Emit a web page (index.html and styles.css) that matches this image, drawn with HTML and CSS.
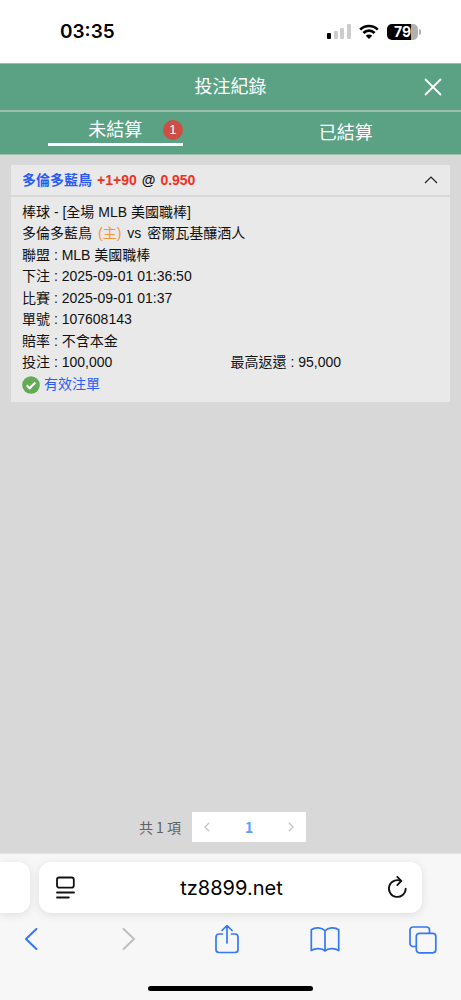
FILE: index.html
```html
<!DOCTYPE html>
<html lang="zh-Hant">
<head>
<meta charset="utf-8">
<meta name="viewport" content="width=device-width, initial-scale=1">
<title>投注紀錄</title>
<link rel="stylesheet" href="styles.css">
</head>
<body>
<div class="screen">
  <div class="status">
    <span class="clock">03:35</span>
    <div class="indicators">
      <svg class="signal" width="24" height="16" viewBox="0 0 24 16" aria-hidden="true">
        <rect x="0" y="9" width="4" height="6" rx="1" fill="#000"/>
        <rect x="7" y="7" width="4" height="8" rx="1" fill="#ccc"/>
        <rect x="13" y="4" width="4" height="11" rx="1" fill="#ccc"/>
        <rect x="20" y="0" width="4" height="15" rx="1" fill="#ccc"/>
      </svg>
      <svg class="wifi" width="20" height="16" viewBox="0 0 20 16" aria-hidden="true">
        <path d="M1.2 5.600a12.600 12.600 0 0 1 17.600 0M4.400 9a8 8 0 0 1 11.200 0" fill="none" stroke="#000" stroke-width="2.700"/>
        <path d="M6.800 11.700a4.600 4.600 0 0 1 6.400 0L10 15z" fill="#000"/>
      </svg>
      <span class="battery"><span class="level">79</span></span>
    </div>
  </div>

  <header class="titlebar">
    <h1 class="title">投注紀錄</h1>
    <button class="close" type="button" aria-label="關閉">
      <svg width="18" height="18" viewBox="0 0 18 18"><path d="M1 1l16 16M17 1L1 17" fill="none" stroke="#fff" stroke-width="1.8"/></svg>
    </button>
  </header>

  <nav class="tabs">
    <button class="tab active" type="button"><span class="tablabel">未結算<span class="badge">1</span></span></button>
    <button class="tab" type="button">已結算</button>
  </nav>

  <main class="content">
    <article class="card">
      <div class="cardhead">
        <h2 class="pick"><span class="blue">多倫多藍鳥</span> <span class="red">+1+90</span> <span>@</span> <span class="red">0.950</span></h2>
        <button class="collapse" type="button" aria-label="收合">
          <svg width="14" height="8" viewBox="0 0 14 8"><path d="M1 7l6-6 6 6" fill="none" stroke="#222" stroke-width="1.2"/></svg>
        </button>
      </div>
      <div class="cardbody">
        <div class="group">
          <div>棒球 - [全場 MLB 美國職棒]</div>
          <div class="teams"><span>多倫多藍鳥</span> <span class="home">(主)</span> <span>vs</span> <span>密爾瓦基釀酒人</span></div>
        </div>
        <div class="group">
          <div>聯盟 : MLB 美國職棒</div>
          <div>下注 : 2025-09-01 01:36:50</div>
        </div>
        <div class="group">
          <div>比賽 : 2025-09-01 01:37</div>
          <div>單號 : 107608143</div>
        </div>
        <div class="group">
          <div>賠率 : 不含本金</div>
          <div class="amounts"><span>投注 : 100,000</span><span>最高返還 : 95,000</span></div>
        </div>
        <div class="state">
          <svg width="18" height="18" viewBox="0 0 18 18" aria-hidden="true"><circle cx="9" cy="9" r="8.8" fill="#64ab55"/><path d="M4.7 9.2l3 3 5.600-5.800" fill="none" stroke="#fff" stroke-width="2.2"/></svg>
          <span>有效注單</span>
        </div>
      </div>
    </article>

    <div class="pagination">
      <span class="total">共 1 項</span>
      <div class="pages">
        <button type="button" class="page" aria-label="上一頁" disabled><svg width="6" height="10" viewBox="0 0 6 10"><path d="M5.300.600L.900 5l4.400 4.400" fill="none" stroke="#c0c4cc" stroke-width="1.300"/></svg></button>
        <button type="button" class="page current">1</button>
        <button type="button" class="page" aria-label="下一頁" disabled><svg width="6" height="10" viewBox="0 0 6 10"><path d="M.700.600L5.100 5 .700 9.400" fill="none" stroke="#c0c4cc" stroke-width="1.300"/></svg></button>
      </div>
    </div>
  </main>

  <footer class="browser">
    <div class="addressrow">
      <div class="prevtab"></div>
      <div class="address">
        <button type="button" class="icon" aria-label="頁面設定">
          <svg width="20" height="24" viewBox="0 0 20 24"><g fill="none" stroke="#111" stroke-width="1.8" stroke-linecap="round"><rect x="1" y="1.500" width="16.800" height="10.200" rx="2.200"/><path d="M1 16.500h17M1 21.500h11.800"/></g></svg>
        </button>
        <a class="url" href="#">tz8899.net</a>
        <button type="button" class="icon" aria-label="重新載入">
          <svg width="20" height="24" viewBox="0 0 20 24"><g fill="none" stroke="#111" stroke-width="1.8" stroke-linecap="round" stroke-linejoin="round"><path d="M18.700 12.600A8.400 8.400 0 1 1 14 5"/><path d="M10.300 .900l4 4-4 4.200"/></g></svg>
        </button>
      </div>
    </div>
    <div class="toolbar">
      <button type="button" class="tool" aria-label="返回"><svg width="14" height="24" viewBox="0 0 14 24"><path d="M12.400 1L2 11l10.400 10" fill="none" stroke="#3478f6" stroke-width="2" stroke-linecap="round" stroke-linejoin="round"/></svg></button>
      <button type="button" class="tool" aria-label="前進" disabled><svg width="14" height="24" viewBox="0 0 14 24"><path d="M1.600 1L12 11 1.600 21" fill="none" stroke="#bfbfbf" stroke-width="2" stroke-linecap="round" stroke-linejoin="round"/></svg></button>
      <button type="button" class="tool" aria-label="分享"><svg width="24" height="30" viewBox="0 0 24 30"><path d="M7.500 9H4a3 3 0 0 0-3 3v12.500a3 3 0 0 0 3 3h16a3 3 0 0 0 3-3V12a3 3 0 0 0-3-3h-3.500M12 18V1M7 5.500l5-5 5 5" fill="none" stroke="#3478f6" stroke-width="1.700" stroke-linecap="round" stroke-linejoin="round"/></svg></button>
      <button type="button" class="tool" aria-label="書籤"><svg width="30" height="26" viewBox="0 0 30 26"><path d="M15 3.700C12 .300 5 .100 1.300 2.700V23.500c4-2.600 10.700-2.400 13.700.500 3-2.900 9.700-3.100 13.700-.500V2.700C25 .100 18 .300 15 3.700V24" fill="none" stroke="#3478f6" stroke-width="1.700" stroke-linejoin="round"/></svg></button>
      <button type="button" class="tool" aria-label="分頁"><svg width="28" height="28" viewBox="0 0 28 28"><path d="M7 20.500H4A3 3 0 0 1 1 17.500V4A3 3 0 0 1 4 1h13.500a3 3 0 0 1 3 3v3" fill="none" stroke="#3478f6" stroke-width="1.700"/><rect x="7.300" y="7.300" width="19.500" height="19.500" rx="3" fill="none" stroke="#3478f6" stroke-width="1.700"/></svg></button>
    </div>
    <div class="homebar"></div>
  </footer>
</div>
</body>
</html>
```
FILE: styles.css
```css
* { box-sizing: border-box; }
body {
  margin: 0;
  font-family: "Liberation Sans", "Noto Sans CJK TC", sans-serif;
  color: #111;
}
button {
  margin: 0;
  padding: 0;
  border: 0;
  background: none;
  font: inherit;
  color: inherit;
}
svg { display: block; }
.screen {
  min-height: 100vh;
  display: flex;
  flex-direction: column;
  background: #d8d8d8;
}
.status {
  display: flex;
  justify-content: space-between;
  align-items: center;
  height: 63px;
  padding: 0 43px 0 60px;
  background: #fff;
}
.clock {
  font: 600 19px/24px Inter, sans-serif;
  color: #000;
}
.indicators { display: flex; align-items: center; gap: 8px; }
.battery {
  position: relative;
  width: 31px;
  height: 16px;
  border-radius: 5px;
  background: linear-gradient(90deg, #000 79%, #b0b0b0 79%);
  text-align: center;
}
.battery::after {
  content: "";
  position: absolute;
  left: 32px;
  top: 5px;
  width: 2px;
  height: 6px;
  border-radius: 0 2px 2px 0;
  background: #b0b0b0;
}
.level {
  display: block;
  font: 700 14px/16px Inter, sans-serif;
  color: #fff;
}
.titlebar {
  display: grid;
  grid-template-columns: 1fr auto 1fr;
  align-items: center;
  height: 49px;
  border-top: 1px solid #9bbfaf;
  border-bottom: 2px solid #9bbfaf;
  padding: 0 19px;
  background: #5ba284;
  color: #fff;
}
.title {
  grid-column: 2;
  margin: 0;
  font-size: 18px;
  font-weight: 400;
  line-height: 26px;
}
.close { justify-self: end; }
.tabs {
  display: grid;
  grid-template-columns: 1fr 1fr;
  height: 43px;
  border-bottom: 1px solid #9bbfaf;
  background: #5ba284;
  color: #fff;
  font-size: 18px;
  line-height: 26px;
}
.tab.active { padding-bottom: 8px; align-self: end; }
.tablabel {
  display: grid;
  grid-template-columns: 1fr auto 1fr;
  align-items: center;
  width: 135px;
  margin: 0 auto;
  border-bottom: 3px solid #fff;
}
.tablabel::before { content: ""; }
.badge {
  justify-self: end;
  width: 20px;
  height: 20px;
  border-radius: 50%;
  background: #cb4f44;
  font-size: 13px;
  line-height: 20px;
  text-align: center;
}
.content {
  flex: 1;
  display: flex;
  flex-direction: column;
  justify-content: space-between;
  padding: 10px 11px 11px;
}
.card { background: #e9e9e9; font-size: 14px; line-height: 21px; }
.cardhead {
  display: flex;
  justify-content: space-between;
  align-items: center;
  height: 32px;
  padding: 0 12px 0 11px;
  border-bottom: 2px solid #d8d8d8;
}
.pick {
  display: flex;
  gap: 5px;
  margin: 0;
  font-size: 14px;
  font-weight: 700;
}
.blue { color: #2b5df5; }
.red { color: #ef3124; }
.cardbody {
  display: flex;
  flex-direction: column;
  gap: 1px;
  padding: 5px 11px 7px;
}
.teams { display: flex; gap: 6px; }
.home { color: #f5963c; }
.amounts { display: grid; grid-template-columns: 1fr 1fr; }
.state {
  display: flex;
  align-items: center;
  gap: 4px;
  color: #2b5df5;
}
.pagination {
  display: flex;
  justify-content: center;
  align-items: center;
  gap: 11px;
  padding-right: 16px;
}
.total { font: 14px/30px "Noto Sans CJK TC", sans-serif; color: #606266; }
.pages { display: flex; background: #fff; }
.page {
  display: grid;
  place-items: center;
  width: 30px;
  height: 30px;
}
.page.current {
  width: 54px;
  font: 700 14px/30px "Noto Sans CJK TC", sans-serif;
  color: #5b9ff8;
}
.browser {
  border-top: 1px solid #e6e6e6;
  padding: 8px 0 9px;
  background: #f7f7f7;
}
.addressrow { display: flex; gap: 9px; padding-right: 39px; }
.prevtab, .address {
  height: 51px;
  background: #fff;
  box-shadow: 0 2px 10px rgba(0, 0, 0, 0.1);
}
.prevtab { width: 30px; border-radius: 0 12px 12px 0; }
.address {
  flex: 1;
  display: flex;
  justify-content: space-between;
  align-items: center;
  padding: 0 15px 0 17px;
  border-radius: 12px;
}
.url {
  font: 20px/24px Inter, sans-serif;
  color: #000;
  text-decoration: none;
}
.toolbar {
  display: flex;
  justify-content: space-between;
  align-items: center;
  height: 53px;
  padding: 0 24px 0 17px;
}
.tool {
  display: flex;
  justify-content: center;
  width: 28px;
}
.tool svg { flex: none; }
.homebar {
  width: 165px;
  height: 5px;
  margin: 20px auto 0;
  border-radius: 3px;
  background: #000;
}
```
